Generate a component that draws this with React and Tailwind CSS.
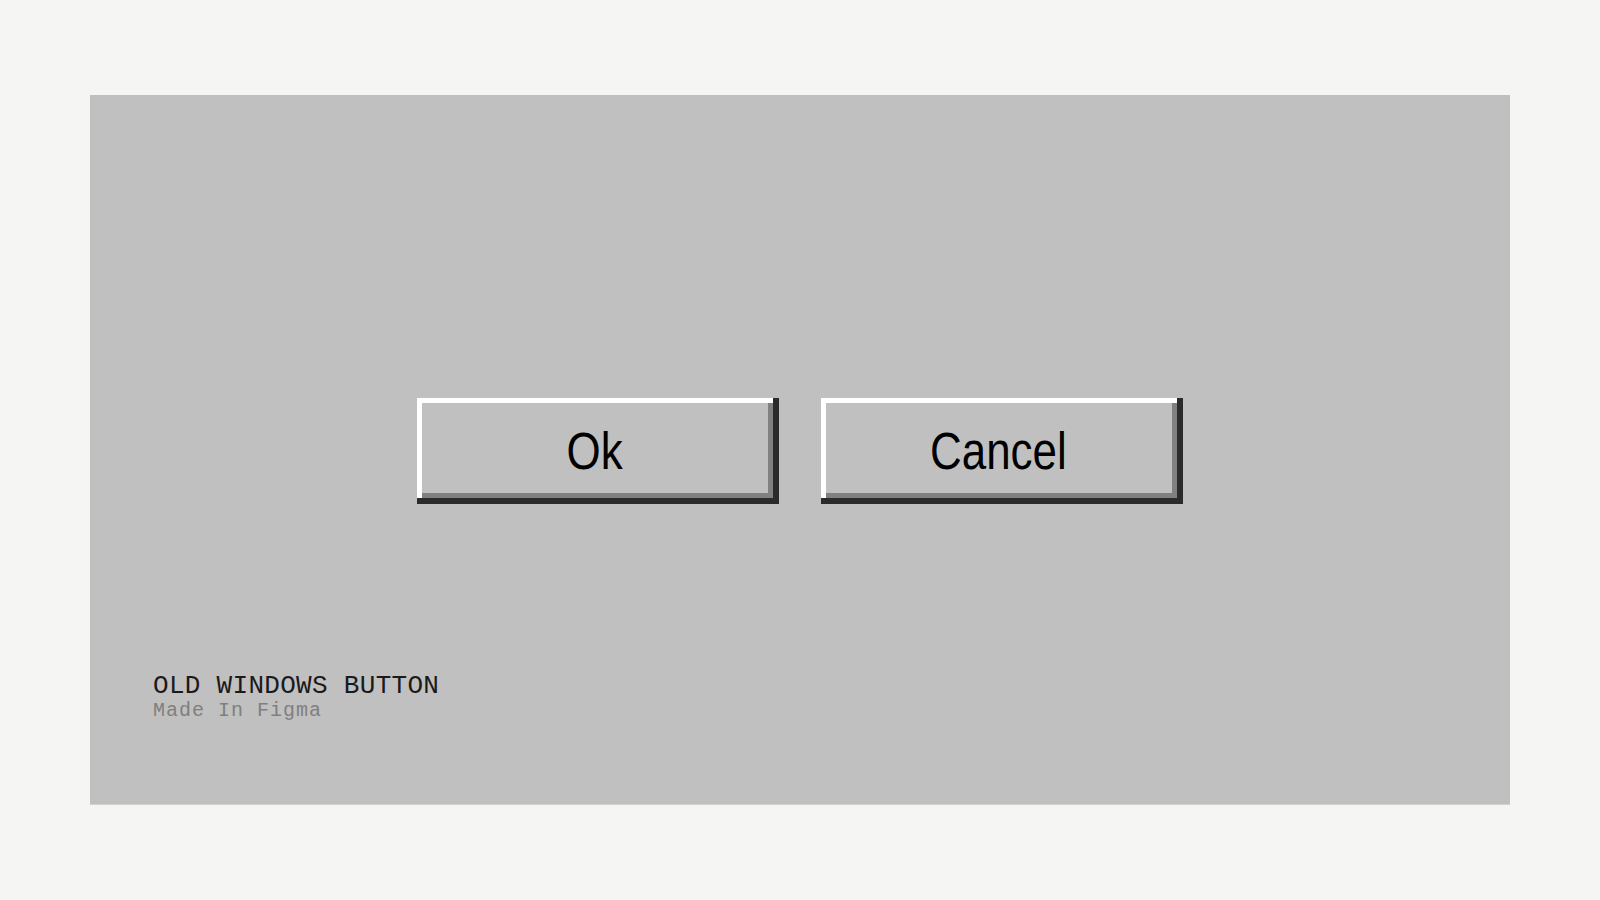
import React from 'react'

function RetroButton({ label }) {
  return (
    <button
      className="w-[362px] h-[106px] pr-[7px] bg-[#c0c0c0] flex items-center justify-center shadow-[inset_-6px_-6px_0_#2b2b2b,inset_5px_5px_0_#ffffff,inset_-11px_-11px_0_#808080]"
    >
      <span className="text-[51px] leading-none text-black scale-x-[0.86] font-['Liberation_Sans',Arial,sans-serif]">
        {label}
      </span>
    </button>
  )
}

export default function App() {
  return (
    <div className="min-h-screen w-full bg-[#f5f5f3] pt-[95px] pl-[90px]">
      <div className="w-[1420px] h-[710px] bg-[#c0c0c0] border-b border-[#d2d2d2] flex flex-col">
        <div className="flex justify-center gap-[42px] pt-[303px]">
          <RetroButton label="Ok" />
          <RetroButton label="Cancel" />
        </div>

        <div className="pl-[63px] mt-[169px] font-['Liberation_Mono','Courier_New',monospace]">
          <p className="text-[26px] leading-none tracking-[0.3px] text-[#1a1a1a]">OLD WINDOWS BUTTON</p>
          <p className="mt-[2px] text-[20px] leading-none tracking-[1px] text-[#7f7f7f]">Made In Figma</p>
        </div>
      </div>
    </div>
  )
}
